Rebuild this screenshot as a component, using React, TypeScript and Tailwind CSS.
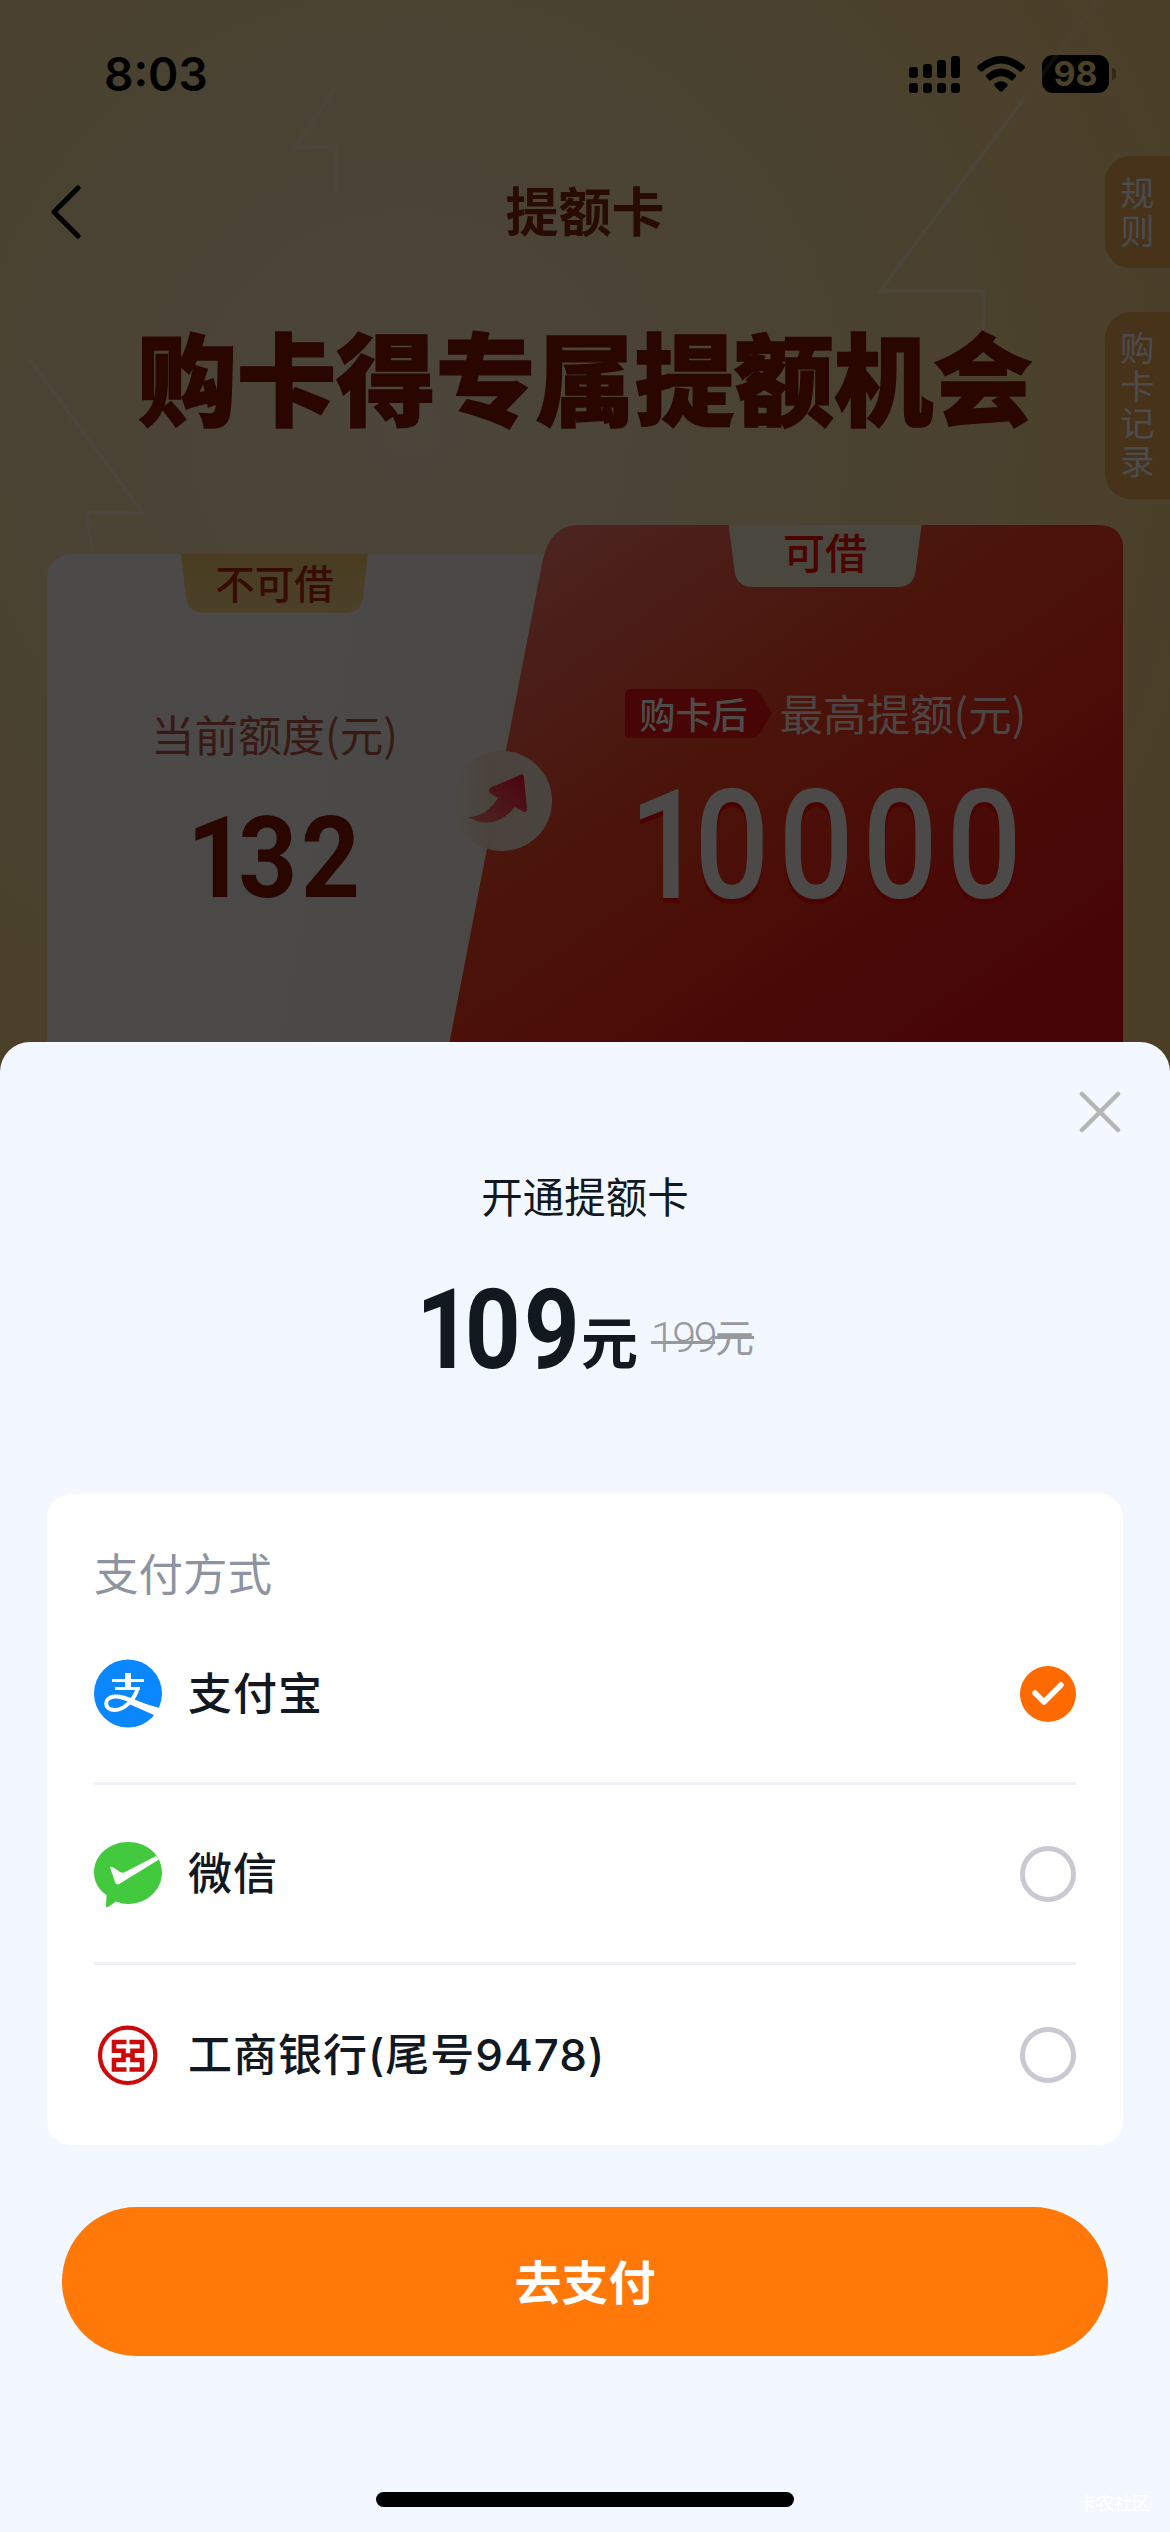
import { clsx } from "clsx";
import type { ReactNode } from "react";

function StatusBar() {
  return (
    <div className="flex h-[146px] items-start justify-between pl-[104px] pr-[54px] pt-[50px]">
      <span className="font-['Inter'] text-[46px] font-semibold leading-[48px] text-black">8:03</span>
      <div className="flex items-center pt-[5px]">
        <svg width="52" height="38" viewBox="0 0 52 38" fill="#000">
          <rect x="0" y="12" width="9" height="11" rx="3" />
          <rect x="14" y="9" width="9" height="14" rx="3" />
          <rect x="28" y="5" width="9" height="18" rx="3" />
          <rect x="42" y="1" width="9" height="22" rx="3" />
          <rect x="0" y="28" width="9" height="10" rx="3" />
          <rect x="14" y="28" width="9" height="10" rx="3" />
          <rect x="28" y="28" width="9" height="10" rx="3" />
          <rect x="42" y="28" width="9" height="10" rx="3" />
        </svg>
        <svg className="ml-4" width="48" height="37" viewBox="0 0 48 37" fill="#000">
          <path d="M1 9.500Q24-9.500 47 9.500Q49 11 47 13L45 15Q43.500 16.500 42 15Q24 0 6 15Q4.500 16.500 3 15L1 13Q-1 11 1 9.500Z" />
          <path d="M9.500 18.500Q24 6.500 38.500 18.500Q40 20 38.500 21.500L36 24Q35 25 33.500 24Q24 16.500 14.500 24Q13 25 12 24L9.500 21.500Q8 20 9.500 18.500Z" />
          <path d="M18 27.500Q24 23 30 27.500Q31.500 29 30 30.500L25.500 35Q24 36.500 22.500 35L18 30.500Q16.500 29 18 27.500Z" />
        </svg>
        <span className="ml-[17px] flex h-[38px] w-[67px] items-center justify-center rounded-[11px] bg-black font-['Inter'] text-[34px] font-bold leading-none text-[#4c4027]">
          98
        </span>
        <span className="ml-[3px] h-[12px] w-[4px] rounded-r-full bg-[#352a18]" />
      </div>
    </div>
  );
}

function SideTab({ label, className }: { label: string; className: string }) {
  return (
    <div className={clsx("w-[65px] rounded-l-[26px] bg-[#46331a] pl-[15px] text-[34.500px] leading-[37.500px] text-[#4c4b4e]", className)}>
      <p className="w-[35px] break-all">{label}</p>
    </div>
  );
}

function Backdrop() {
  return (
    <svg className="absolute left-0 top-0" width="1170" height="560" viewBox="0 0 1170 560" fill="none" stroke="#4c4843" strokeWidth="4">
      <path d="M1098 0L1023 100" opacity=".2" />
      <path d="M1023 100L880 291H983V330" opacity=".55" />
      <path d="M336 87L295 147H336V190" opacity=".45" />
      <path d="M30 360L143 513H87L92 552" opacity=".6" />
    </svg>
  );
}

// Condensed numerals: the leading 1 sits closer to its neighbour than the others
function Figure({ value, className }: { value: string; className: string }) {
  return (
    <span className={clsx("inline-block origin-left whitespace-nowrap font-['Roboto']", className)}>
      <span className="tracking-[-0.075em]">{value[0]}</span>
      {value.slice(1)}
    </span>
  );
}

function LeftPanel() {
  return (
    <div className="flex h-[488px] w-[500px] flex-col rounded-tl-[24px] bg-[linear-gradient(100deg,#4b4a48_0%,#4b4947_80%,#4a423b_94%,#4a3d34_100%)]">
      <div className="ml-[134px] flex h-[59px] w-[187px] items-center justify-center bg-[linear-gradient(#493c20,#4b4129)] pb-[3px] text-[39.500px] font-medium leading-none text-[#360c02] [clip-path:path('M0_0H187L182_43Q180_59_164_59H23Q7_59_5_43Z')]">
        不可借
      </div>
      <p className="mt-[96px] pl-[104px] text-[43.500px] leading-[50px] text-[#381a15]">当前额度(元)</p>
      <p className="mt-[44px] pl-[140px] leading-[112px]">
        <Figure value="132" className="scale-x-[.91] text-[113px] font-bold tracking-[0.035em] text-[#2a0600]" />
      </p>
    </div>
  );
}

function RightPanel() {
  return (
    <div className="-ml-[97px] flex h-[517px] w-[674px] flex-col bg-[linear-gradient(145deg,#4c2825_0%,#4b1f19_18%,#4a150b_40%,#4a0d07_62%,#470508_86%)] [clip-path:path('M0_517L93_36Q100_0_130_0H648Q674_0_674_26V517Z')]">
      <div className="ml-[279px] flex h-[62px] w-[193px] items-center justify-center bg-[#4a473f] pb-[10px] text-[42px] font-medium leading-none text-[#4b0300] [clip-path:path('M0_0H193L187_46Q185_62_169_62H24Q8_62_6_46Z')]">
        可借
      </div>
      <div className="mt-[101px] flex items-center pl-[175px]">
        <span className="flex h-[49px] w-[147px] items-center bg-[#470505] pb-[2px] pl-[15px] text-[36px] font-medium leading-none text-[#4e4b4b] [clip-path:path('M6_0H126Q133_0_137_7L147_24L137_42Q133_49_126_49H6Q0_49_0_43V6Q0_0_6_0Z')]">
          购卡后
        </span>
        <span className="ml-[8px] pb-px text-[43.500px] leading-[50px] text-[#4d4543]">最高提额(元)</span>
      </div>
      <p className="mt-[28px] pl-[179px] leading-[157px]">
        <Figure value="10000" className="scale-x-[.865] text-[153px] font-medium tracking-[0.067em] text-[#4b4a49] [text-shadow:0_5px_0_#480302]" />
      </p>
    </div>
  );
}

function UpgradeArrow() {
  return (
    <svg className="absolute left-[451px] top-[750px]" width="102" height="102" viewBox="0 0 102 102">
      <defs>
        <linearGradient id="disc" x1="0" x2="1">
          <stop offset="0" stopColor="#4a443e" stopOpacity=".2" />
          <stop offset=".4" stopColor="#4a423c" />
          <stop offset="1" stopColor="#4b4540" />
        </linearGradient>
        <linearGradient id="arrow" x1="0" y1="1" x2="1" y2="0">
          <stop offset="0" stopColor="#4a2721" />
          <stop offset="1" stopColor="#4c030e" />
        </linearGradient>
      </defs>
      <circle cx="51" cy="51" r="50" fill="url(#disc)" />
      <path
        d="M17 67Q36 66 47 48L39 43Q36 39 41 37L69 25Q73 23 73 28L76 58Q76 64 71 61L64 57Q43 82 17 67Z"
        fill="url(#arrow)"
      />
    </svg>
  );
}

function AlipayIcon() {
  return (
    <svg width="68" height="69" viewBox="0 0 68 69">
      <circle cx="34" cy="34.500" r="34" fill="#0a86ff" />
      <path d="M18 21.500H50M21 29.500H46" stroke="#fff" strokeWidth="3" fill="none" />
      <path d="M34 14V29" stroke="#fff" strokeWidth="6" />
      <path d="M43.500 29.500C41 40 30 51.500 20 51C9.500 50 9.500 39 20 37.500C30 36.500 41 44 63 51" stroke="#fff" strokeWidth="4" fill="none" />
      <path d="M39 41.500L65.500 49L62 57L34 44.500Z" fill="#fff" />
    </svg>
  );
}

function WechatPayIcon() {
  return (
    <svg width="68" height="68" viewBox="0 0 68 68">
      <path d="M34 2C15 2 0 15.500 0 32.500C0 42 5 50 12.500 55L12 66Q12 68 14 67L22 61.500Q28 64 34 64C53 64 68 50 68 32.500C68 15 53 2 34 2Z" fill="#43c93e" />
      <path d="M16 27Q18 26 26 32Q29 34 33 31L62 16L65 19.500L26 43.500Q22 46 21 42Z" fill="#fff" />
    </svg>
  );
}

function IcbcIcon() {
  return (
    <svg width="68" height="68" viewBox="0 0 68 68" fill="none" stroke="#cc0a0a">
      <circle cx="33.700" cy="34.300" r="27.700" strokeWidth="4.200" />
      <path d="M32.500 21H20V29.700H29.500V39H20V48.500H32.500" strokeWidth="4.600" />
      <path d="M35.500 21H48V29.700H38.500V39H48V48.500H35.500" strokeWidth="4.600" />
      <path d="M29 34.300H39" strokeWidth="4" />
    </svg>
  );
}

function Radio({ checked }: { checked: boolean }) {
  if (!checked) {
    return <span className="size-14 rounded-full border-[5px] border-[#c9c9d2]" />;
  }
  return (
    <span className="flex size-14 items-center justify-center rounded-full bg-[#ff6a00]">
      <svg width="34" height="26" viewBox="0 0 34 26" fill="none" stroke="#fff" strokeWidth="5.500" strokeLinecap="round" strokeLinejoin="round">
        <path d="M4 12L13 21L30 4" />
      </svg>
    </span>
  );
}

function PayRow({ icon, name, checked = false, last = false }: { icon: ReactNode; name: string; checked?: boolean; last?: boolean }) {
  return (
    <li className={clsx("flex h-[180px] items-center", !last && "border-b-[3px] border-[#efeff5]")}>
      {icon}
      <span className="ml-[26px] flex-1 font-['Inter','Noto_Sans_CJK_SC',sans-serif] text-[44px] font-medium leading-none tracking-[1px] text-[#11181f]">{name}</span>
      <Radio checked={checked} />
    </li>
  );
}

export default function App() {
  return (
    <div className="relative flex h-[2532px] w-[1170px] flex-col overflow-hidden bg-[radial-gradient(circle_at_35%_17%,#4b453b_0%,#4a4230_22%,#4b3e25_45%,#4a4131_70%)] font-['Noto_Sans_CJK_SC',sans-serif]">
      <Backdrop />
      <StatusBar />

      <header className="flex h-[132px] items-center justify-center pb-[6px]">
        <svg className="absolute left-[50px] top-[185px]" width="32" height="54" viewBox="0 0 32 54" fill="none" stroke="#000" strokeWidth="5" strokeLinecap="round" strokeLinejoin="round">
          <path d="M28 3L4 27L28 51" />
        </svg>
        <h1 className="text-[53px] font-bold leading-none text-[#280b02]">提额卡</h1>
      </header>
      <div className="absolute right-0 top-[156px] flex flex-col gap-[44px]">
        <SideTab label="规则" className="h-[112px] pt-[17px]" />
        <SideTab label="购卡记录" className="h-[187px] pt-[16px]" />
      </div>

      <h2 className="mt-[47px] h-[100px] whitespace-nowrap text-center text-[99.500px] font-black leading-[100px] text-[#290600] [-webkit-text-stroke:1.500px_#290600]">
        购卡得专属提额机会
      </h2>

      <main className="mt-[100px] flex items-end px-[47px]">
        <LeftPanel />
        <RightPanel />
      </main>
      <UpgradeArrow />

      {/* Payment sheet */}
      <section className="relative flex h-[1490px] flex-col items-center rounded-t-[30px] bg-[#f3f7ff]">
        <svg className="absolute left-[1079px] top-[49px]" width="42" height="42" viewBox="0 0 42 42" stroke="#b4b6b6" strokeWidth="4.500" strokeLinecap="round">
          <path d="M3 3L39 39M39 3L3 39" />
        </svg>
        <h3 className="mt-[128px] text-[41.500px] leading-[50px] text-[#11181f]">开通提额卡</h3>
        <div className="mt-[54px] flex h-[107px] items-baseline self-start pl-[416px] text-[#11181f]">
          <Figure value="109" className="w-[165px] scale-x-[.88] text-[111px] font-bold leading-[112px] tracking-[0.03em]" />
          <span className="relative bottom-[4px] text-[57px] font-bold leading-none">元</span>
          <del className="relative bottom-[16px] ml-[13px] text-[39px] leading-none text-[#97999c] decoration-[3px]">
            <span className="font-['Roboto'] text-[43px] font-light tracking-[-2.500px]">199</span>元
          </del>
        </div>

        <div className="mt-[113px] h-[651px] w-[1076px] rounded-[24px] bg-white px-[47px] pt-[53px]">
          <h4 className="text-[44.500px] leading-[50px] text-[#8d93a0]">支付方式</h4>
          <ul className="mt-2">
            <PayRow icon={<AlipayIcon />} name="支付宝" checked />
            <PayRow icon={<WechatPayIcon />} name="微信" />
            <PayRow icon={<IcbcIcon />} name="工商银行(尾号9478)" last />
          </ul>
        </div>

        <button className="mt-[62px] h-[149px] w-[1046px] rounded-full bg-[#ff7808] pb-[4px] text-[47px] font-bold leading-none text-white">
          去支付
        </button>
        <div className="mt-[136px] h-[15px] w-[418px] rounded-full bg-black" />
        <span className="absolute bottom-[21px] right-[20px] text-[18px] leading-none text-white">卡农社区</span>
      </section>
    </div>
  );
}
